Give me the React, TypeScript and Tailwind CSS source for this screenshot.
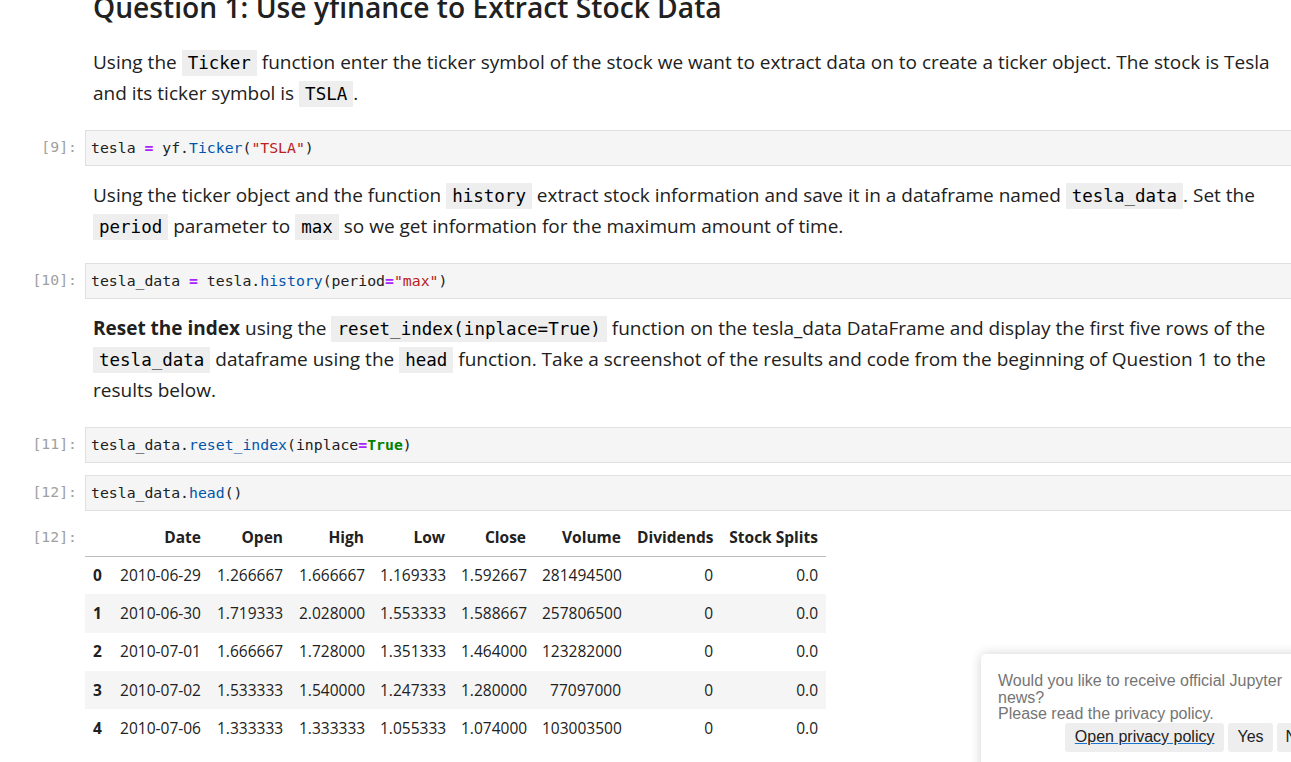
import React from 'react';

const textFont = { fontFamily: '"Open Sans", "Noto Sans", sans-serif' };
const monoFont = { fontFamily: '"DejaVu Sans Mono", "Liberation Mono", monospace' };

const Code: React.FC<{ children: React.ReactNode }> = ({ children }) => (
  <code
    className="bg-[#eeeeee] px-[6px] py-[3px] text-[17.5px] leading-none text-black"
    style={monoFont}
  >
    {children}
  </code>
);

const Prompt: React.FC<{ label: string }> = ({ label }) => (
  <div
    className="w-[85px] shrink-0 pr-[8px] text-right text-[14.8px] leading-[34px] text-[#a0a0a0]"
    style={monoFont}
  >
    {label}
  </div>
);

const CodeCell: React.FC<{ n: string; children: React.ReactNode }> = ({ n, children }) => (
  <div className="flex">
    <Prompt label={`[${n}]:`} />
    <div
      className="flex-1 h-[36px] border border-[#e0e0e0] bg-[#f5f5f5] px-[5px] text-[14.8px] leading-[34px] text-[#212121] whitespace-pre"
      style={monoFont}
    >
      {children}
    </div>
  </div>
);

const Md: React.FC<{ children: React.ReactNode; className?: string }> = ({ children, className = '' }) => (
  <div className={`flex ${className}`}>
    <div className="w-[85px] shrink-0" />
    <p className="flex-1 pl-[8px] pr-[30px] text-[19px] leading-[30.6px] text-[#212121]" style={textFont}>
      {children}
    </p>
  </div>
);

const op = 'text-[#aa22ff] font-bold';
const fn = 'text-[#0055aa]';
const str = 'text-[#ba2121]';

const rows = [
  ['0', '2010-06-29', '1.266667', '1.666667', '1.169333', '1.592667', '281494500', '0', '0.0'],
  ['1', '2010-06-30', '1.719333', '2.028000', '1.553333', '1.588667', '257806500', '0', '0.0'],
  ['2', '2010-07-01', '1.666667', '1.728000', '1.351333', '1.464000', '123282000', '0', '0.0'],
  ['3', '2010-07-02', '1.533333', '1.540000', '1.247333', '1.280000', '77097000', '0', '0.0'],
  ['4', '2010-07-06', '1.333333', '1.333333', '1.055333', '1.074000', '103003500', '0', '0.0'],
];

const headers = ['', 'Date', 'Open', 'High', 'Low', 'Close', 'Volume', 'Dividends', 'Stock Splits'];
const widths = [25, 99, 82, 81, 81, 81, 95, 92, 105];

export default function App() {
  return (
    <div className="relative w-[1291px] h-[762px] overflow-hidden bg-white">
      <div className="w-[1320px]">
        <div className="flex -mt-[10px]">
          <div className="w-[85px] shrink-0" />
          <h2
            className="pl-[8px] text-[28.2px] font-semibold leading-[35px] text-[#212121]"
            style={textFont}
          >
            Question 1: Use yfinance to Extract Stock Data
          </h2>
        </div>

        <Md className="mt-[22px]">
          Using the <Code>Ticker</Code> function enter the ticker symbol of the stock we want to extract data on to
          create a ticker object. The stock is Tesla and its ticker symbol is <Code>TSLA</Code>.
        </Md>

        <div className="mt-[22px]">
          <CodeCell n="9">
            tesla <span className={op}>=</span> yf.<span className={fn}>Ticker</span>(
            <span className={str}>"TSLA"</span>)
          </CodeCell>
        </div>

        <Md className="mt-[14px]">
          Using the ticker object and the function <Code>history</Code> extract stock information and save it in a
          dataframe named <Code>tesla_data</Code>. Set the <Code>period</Code> parameter to <Code>max</Code> so we get
          information for the maximum amount of time.
        </Md>

        <div className="mt-[22px]">
          <CodeCell n="10">
            tesla_data <span className={op}>=</span> tesla.<span className={fn}>history</span>(period
            <span className={op}>=</span>
            <span className={str}>"max"</span>)
          </CodeCell>
        </div>

        <Md className="mt-[14px]">
          <b className="font-bold">Reset the index</b> using the <Code>reset_index(inplace=True)</Code> function on the
          tesla_data DataFrame and display the first five rows of the <Code>tesla_data</Code> dataframe using the{' '}
          <Code>head</Code> function. Take a screenshot of the results and code from the beginning of Question 1 to the
          results below.
        </Md>

        <div className="mt-[22px]">
          <CodeCell n="11">
            tesla_data.<span className={fn}>reset_index</span>(inplace<span className={op}>=</span>
            <span className="text-[#008000] font-bold">True</span>)
          </CodeCell>
        </div>

        <div className="mt-[12px]">
          <CodeCell n="12">
            tesla_data.<span className={fn}>head</span>()
          </CodeCell>
        </div>

        <div className="mt-[9px] flex">
          <Prompt label="[12]:" />
          <table className="w-[741px] table-fixed border-collapse text-[15.5px] text-[#212121]" style={textFont}>
            <colgroup>
              {widths.map((w, i) => (
                <col key={i} style={{ width: w }} />
              ))}
            </colgroup>
            <thead>
              <tr className="border-b border-[#bdbdbd]">
                {headers.map((h, i) => (
                  <th key={i} className="h-[36px] px-[8px] text-right font-bold whitespace-nowrap">
                    {h}
                  </th>
                ))}
              </tr>
            </thead>
            <tbody>
              {rows.map((r, ri) => (
                <tr key={ri} className={ri % 2 === 1 ? 'bg-[#f5f5f5]' : ''}>
                  {r.map((c, ci) => (
                    <td
                      key={ci}
                      className={`h-[38.3px] whitespace-nowrap ${
                        ci === 0 ? 'pl-[8px] text-left font-bold' : 'px-[8px] text-right'
                      }`}
                    >
                      {c}
                    </td>
                  ))}
                </tr>
              ))}
            </tbody>
          </table>
        </div>
      </div>

      <div
        className="absolute left-[981px] top-[654px] w-[351px] h-[140px] rounded-[5px] bg-white px-[17px] pt-[19px] shadow-[0_0_12px_rgba(0,0,0,0.18)]"
        style={{ fontFamily: '"Liberation Sans", Arial, sans-serif' }}
      >
        <p className="text-[16px] leading-[16.5px] text-[#757575]">
          Would you like to receive official Jupyter news?
          <br />
          Please read the privacy policy.
        </p>
        <div className="flex justify-end gap-[4px]">
          <button className="h-[29px] rounded-[3px] bg-[#eeeeee] px-[10px] text-[16px] text-[#212121] underline decoration-[#1976d2]">
            Open privacy policy
          </button>
          <button className="h-[29px] rounded-[3px] bg-[#eeeeee] px-[9px] text-[16px] text-[#212121]">Yes</button>
          <button className="h-[29px] rounded-[3px] bg-[#eeeeee] px-[9px] text-[16px] text-[#212121]">No</button>
        </div>
      </div>
    </div>
  );
}
